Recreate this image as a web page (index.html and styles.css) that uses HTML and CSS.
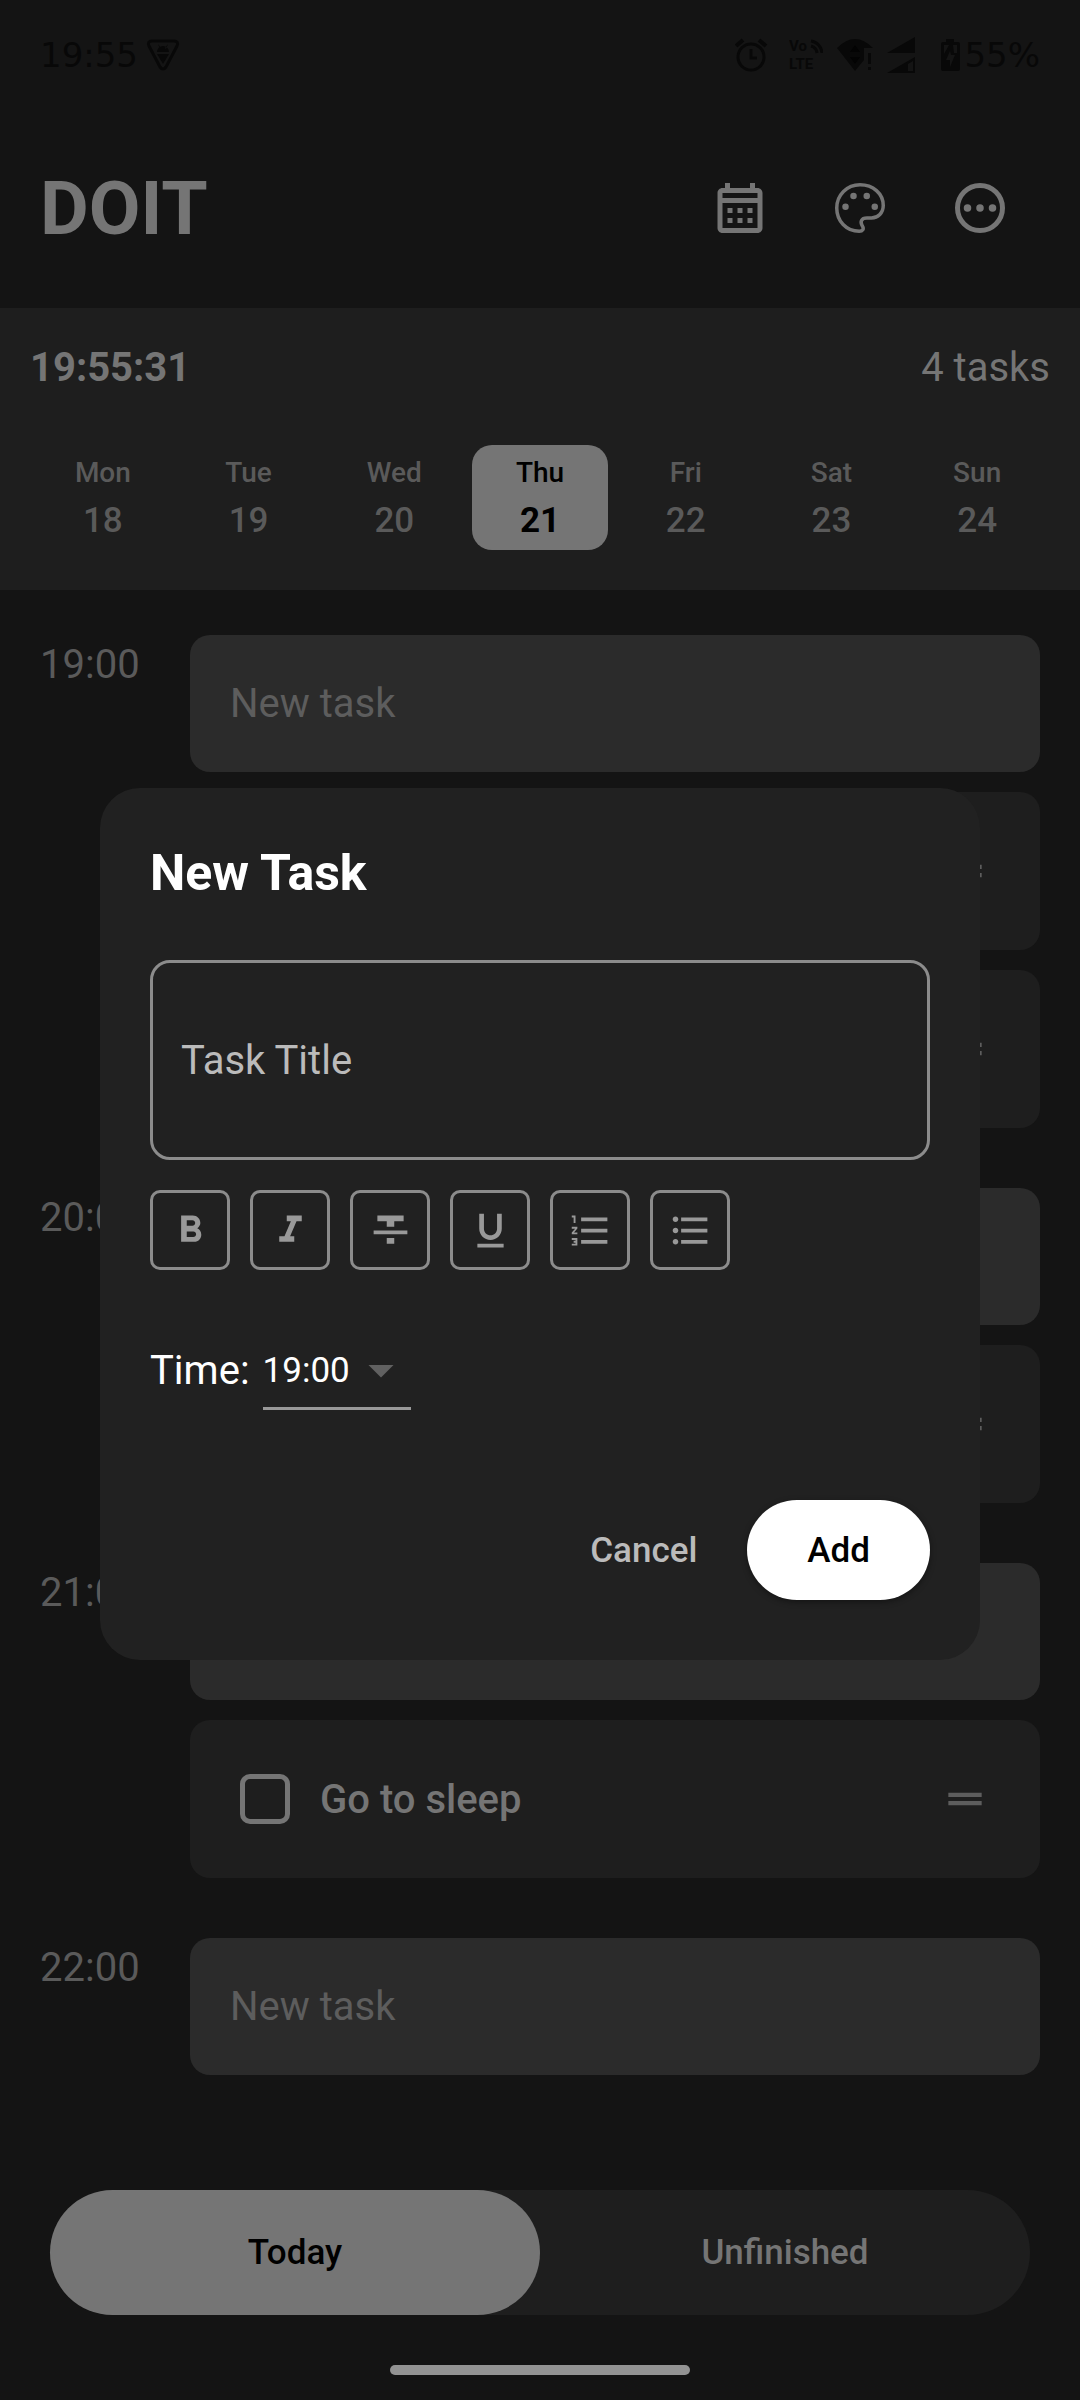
FILE: index.html
```html
<!DOCTYPE html>
<html lang="en">
  <head>
    <meta charset="UTF-8" />
    <meta name="viewport" content="width=device-width, initial-scale=1.0" />
    <title>DOIT</title>
    <link rel="stylesheet" href="styles.css">
  </head>
  <body>
    <div class="status-bar">
      <div class="status-left">
        <span>19:55</span>
        <svg width="34" height="32" viewBox="0 0 34 32">
          <path d="M6 2h22q5 0 3 5L20 28q-3 4-6 0L3 7Q1 2 6 2z" fill="none" stroke="currentColor" stroke-width="3" />
          <path d="M11 13a6 6 0 0 1 12 0zM11 15h12l-6 10zM12 5l3 4-1 1zM22 5l-3 4 1 1z" fill="currentColor" />
        </svg>
      </div>
      <div class="status-right">
        <svg width="40" height="36" viewBox="0 0 40 36" fill="none" stroke="currentColor">
          <circle cx="16" cy="20" r="13" stroke-width="3" />
          <path d="M16 12v9h6" stroke-width="3" />
          <path d="M1 9l7-6M31 9l-7-6" stroke-width="4" />
        </svg>
        <svg class="volte" width="34" height="36" viewBox="0 0 34 36">
          <text x="0" y="14">Vo</text>
          <text x="0" y="32">LTE</text>
          <path d="M22 9a8 8 0 0 1 6 7M22 4a13 13 0 0 1 11 12" fill="none" stroke="currentColor" stroke-width="3" />
        </svg>
        <svg width="36" height="36" viewBox="0 0 36 36" fill="currentColor">
          <path d="M0 11Q18-7 36 11h-9v12l-9 11z" />
          <path d="M31 16h3v11h-3zM31 30h3v3h-3z" />
          <path d="M18 8l5 7H13zM18 27l-5-7h10z" fill="#030303" />
        </svg>
        <svg width="40" height="36" viewBox="0 0 40 36" fill="currentColor">
          <path d="M0 16L28 0v16zM0 36l28-16v16z" />
          <path d="M21 27l5-3v10h-5z" fill="#141414" />
        </svg>
        <svg width="19" height="36" viewBox="0 0 19 36">
          <path d="M5 2h8v3h4q2 0 2 2v25q0 2-2 2H2q-2 0-2-2V7q0-2 2-2h3z" fill="currentColor" />
          <path d="M3 17V8h5zM9 14l-4 9h4v7l5-12h-4zM12 8h4v8h-3z" fill="#141414" />
        </svg>
        <span>55%</span>
      </div>
    </div>

    <header class="header">
      <h1>DOIT</h1>
      <div class="header-actions">
        <button class="icon-button" aria-label="Calendar">
          <svg viewBox="0 0 24 24" fill="currentColor"><path d="M19 4h-1V2h-2v2H8V2H6v2H5c-1.11 0-1.99.9-1.99 2L3 20c0 1.1.89 2 2 2h14c1.1 0 2-.9 2-2V6c0-1.1-.9-2-2-2zm0 16H5V10h14v10zm0-12H5V6h14v2zM9 14H7v-2h2v2zm4 0h-2v-2h2v2zm4 0h-2v-2h2v2zm-8 4H7v-2h2v2zm4 0h-2v-2h2v2zm4 0h-2v-2h2v2z" /></svg>
        </button>
        <button class="icon-button" aria-label="Theme">
          <svg viewBox="0 0 24 24" fill="currentColor">
            <path d="M12 2.7c5.2 0 9.3 3.5 9.3 8.3 0 2.9-2.1 5-4.7 5h-1.8c-2.4 0-2.8 1.6-1.9 3.1.9 1.4.1 2.2-1.2 2.2-5.2 0-9-4.1-9-9.3S6.8 2.7 12 2.7z" fill="none" stroke="currentColor" stroke-width="1.4" />
            <circle cx="6.2" cy="11.5" r="1.3" />
            <circle cx="9.4" cy="7.2" r="1.3" />
            <circle cx="14.7" cy="7.2" r="1.3" />
            <circle cx="17.9" cy="11.5" r="1.3" />
          </svg>
        </button>
        <button class="icon-button" aria-label="More">
          <svg viewBox="0 0 24 24" fill="currentColor">
            <circle cx="12" cy="12" r="9" fill="none" stroke="currentColor" stroke-width="2" />
            <circle cx="7" cy="12" r="1.5" />
            <circle cx="12" cy="12" r="1.5" />
            <circle cx="17" cy="12" r="1.5" />
          </svg>
        </button>
      </div>
    </header>

    <section class="week-panel">
      <div class="summary">
        <time class="clock">19:55:31</time>
        <span>4 tasks</span>
      </div>
      <div class="week">
        <button class="day"><span class="day-name">Mon</span><span class="day-number">18</span></button>
        <button class="day"><span class="day-name">Tue</span><span class="day-number">19</span></button>
        <button class="day"><span class="day-name">Wed</span><span class="day-number">20</span></button>
        <button class="day selected"><span class="day-name">Thu</span><span class="day-number">21</span></button>
        <button class="day"><span class="day-name">Fri</span><span class="day-number">22</span></button>
        <button class="day"><span class="day-name">Sat</span><span class="day-number">23</span></button>
        <button class="day"><span class="day-name">Sun</span><span class="day-number">24</span></button>
      </div>
    </section>

    <main class="timeline">
      <div class="hour">
        <time class="hour-label">19:00</time>
        <div class="hour-tasks">
          <input class="new-task" type="text" placeholder="New task" aria-label="New task at 19:00" />
          <div class="task">
            <input class="task-check" type="checkbox" aria-label="Done" />
            <svg class="drag-handle" viewBox="0 0 24 24"><path d="M20 9H4v2h16V9zM4 15h16v-2H4v2z" /></svg>
          </div>
          <div class="task">
            <input class="task-check" type="checkbox" aria-label="Done" />
            <svg class="drag-handle" viewBox="0 0 24 24"><path d="M20 9H4v2h16V9zM4 15h16v-2H4v2z" /></svg>
          </div>
        </div>
      </div>
      <div class="hour">
        <time class="hour-label">20:00</time>
        <div class="hour-tasks">
          <input class="new-task" type="text" placeholder="New task" aria-label="New task at 20:00" />
          <div class="task">
            <input class="task-check" type="checkbox" aria-label="Done" />
            <svg class="drag-handle" viewBox="0 0 24 24"><path d="M20 9H4v2h16V9zM4 15h16v-2H4v2z" /></svg>
          </div>
        </div>
      </div>
      <div class="hour">
        <time class="hour-label">21:00</time>
        <div class="hour-tasks">
          <input class="new-task" type="text" placeholder="New task" aria-label="New task at 21:00" />
          <div class="task">
            <input class="task-check" type="checkbox" id="sleep" />
            <label for="sleep">Go to sleep</label>
            <svg class="drag-handle" viewBox="0 0 24 24"><path d="M20 9H4v2h16V9zM4 15h16v-2H4v2z" /></svg>
          </div>
        </div>
      </div>
      <div class="hour">
        <time class="hour-label">22:00</time>
        <div class="hour-tasks">
          <input class="new-task" type="text" placeholder="New task" aria-label="New task at 22:00" />
        </div>
      </div>
    </main>

    <nav class="tabs">
      <button class="tab active">Today</button>
      <button class="tab">Unfinished</button>
    </nav>
    <div class="home-indicator"></div>

    <div class="overlay">
      <form class="dialog" role="dialog" aria-labelledby="dialogTitle">
        <h2 id="dialogTitle">New Task</h2>
        <input class="title-input" type="text" placeholder="Task Title" aria-label="Task Title" />

        <div class="toolbar">
          <button type="button" class="format-button" aria-label="Bold">
            <svg viewBox="0 0 24 24"><path d="M15.6 10.79c.97-.67 1.65-1.77 1.65-2.79 0-2.26-1.75-4-4-4H7v14h7.04c2.09 0 3.71-1.7 3.71-3.79 0-1.52-.86-2.82-2.15-3.42zM10 6.5h3c.83 0 1.5.67 1.5 1.5s-.67 1.5-1.5 1.5h-3v-3zm3.5 9H10v-3h3.5c.83 0 1.5.67 1.5 1.5s-.67 1.5-1.5 1.5z" /></svg>
          </button>
          <button type="button" class="format-button" aria-label="Italic">
            <svg viewBox="0 0 24 24"><path d="M10 4v3h2.21l-3.42 8H6v3h8v-3h-2.21l3.42-8H18V4z" /></svg>
          </button>
          <button type="button" class="format-button" aria-label="Strikethrough">
            <svg viewBox="0 0 24 24"><path d="M10 19h4v-3h-4v3zM5 4v3h5v3h4V7h5V4H5zM3 14h18v-2H3v2z" /></svg>
          </button>
          <button type="button" class="format-button" aria-label="Underline">
            <svg viewBox="0 0 24 24"><path d="M12 17c3.31 0 6-2.69 6-6V3h-2.5v8c0 1.93-1.57 3.5-3.5 3.5S8.5 12.93 8.5 11V3H6v8c0 3.31 2.69 6 6 6zm-7 2v2h14v-2H5z" /></svg>
          </button>
          <button type="button" class="format-button" aria-label="Numbered list">
            <svg viewBox="0 0 24 24"><path d="M2 17h2v.5H3v1h1v.5H2v1h3v-4H2v1zm1-9h1V4H2v1h1v3zm-1 3h1.8L2 13.1v.9h3v-1H3.2L5 10.9V10H2v1zm5-6v2h14V5H7zm0 14h14v-2H7v2zm0-6h14v-2H7v2z" /></svg>
          </button>
          <button type="button" class="format-button" aria-label="Bulleted list">
            <svg viewBox="0 0 24 24"><path d="M4 10.5c-.83 0-1.5.67-1.5 1.5s.67 1.5 1.5 1.5 1.5-.67 1.5-1.5-.67-1.5-1.5-1.5zm0-6c-.83 0-1.5.67-1.5 1.5S3.17 7.5 4 7.5 5.5 6.83 5.5 6 4.83 4.5 4 4.5zm0 12c-.83 0-1.5.68-1.5 1.5s.68 1.5 1.5 1.5 1.5-.68 1.5-1.5-.67-1.5-1.5-1.5zM7 19h14v-2H7v2zm0-6h14v-2H7v2zm0-8v2h14V5H7z" /></svg>
          </button>
        </div>

        <div class="time-row">
          <label for="taskTime">Time:</label>
          <div class="select-wrap">
            <select id="taskTime">
              <option>19:00</option>
              <option>20:00</option>
              <option>21:00</option>
              <option>22:00</option>
            </select>
            <svg class="select-arrow" viewBox="0 0 24 24"><path d="M7 10l5 5 5-5z" /></svg>
          </div>
        </div>

        <div class="dialog-actions">
          <button type="button" class="cancel-button">Cancel</button>
          <button type="submit" class="add-button">Add</button>
        </div>
      </form>
    </div>
  </body>
</html>
```

FILE: styles.css
```css
* {
  margin: 0;
  padding: 0;
  box-sizing: border-box;
}

body {
  font-family: Roboto, "Liberation Sans", sans-serif;
  font-size: 40px;
  background: #141414;
  color: #757575;
  min-height: 100vh;
  display: flex;
  flex-direction: column;
}

button,
input,
select {
  font: inherit;
  color: inherit;
  background: none;
  border: none;
  outline: none;
}

button {
  cursor: pointer;
}

svg {
  display: block;
  flex-shrink: 0;
}

/* Status bar */
.status-bar {
  height: 110px;
  padding: 0 40px;
  display: flex;
  align-items: center;
  justify-content: space-between;
  font-family: "DejaVu Sans", sans-serif;
  font-size: 34px;
  color: #080808;
}

.status-left {
  display: flex;
  align-items: center;
  gap: 8px;
}

.status-right {
  display: flex;
  align-items: center;
  gap: 14px;
}

.status-right span {
  margin-left: -10px;
}

.volte {
  font-family: Roboto, sans-serif;
  font-size: 15px;
  font-weight: 700;
  fill: currentColor;
}

/* Header */
.header {
  height: 198px;
  padding: 0 40px 2px;
  display: flex;
  align-items: center;
  justify-content: space-between;
}

.header h1 {
  font-size: 75px;
  font-weight: 700;
}

.header-actions {
  display: flex;
}

.icon-button {
  width: 120px;
  height: 120px;
  display: flex;
  align-items: center;
  justify-content: center;
}

.icon-button svg {
  width: 60px;
  height: 60px;
}

/* Week */
.week-panel {
  background: #1e1e1e;
  padding: 30px 30px 40px;
}

.summary {
  display: flex;
  justify-content: space-between;
  line-height: 60px;
  margin-bottom: 47px;
}

.clock {
  font-weight: 700;
}

.week {
  display: flex;
}

.day {
  flex: 1;
  height: 105px;
  margin: 0 5px;
  border-radius: 20px;
  display: flex;
  flex-direction: column;
  align-items: center;
  justify-content: center;
  gap: 6px;
  font-weight: 500;
  color: #5a5a5a;
}

.day-name {
  font-size: 28px;
  line-height: 40px;
}

.day-number {
  font-size: 35px;
  line-height: 44px;
}

.day.selected {
  background: #757575;
  color: #000;
}

.day.selected .day-number {
  font-weight: 700;
}

/* Timeline */
.timeline {
  flex: 1;
  padding: 45px 40px;
  display: flex;
  flex-direction: column;
  gap: 60px;
}

.hour {
  display: flex;
}

.hour-label {
  width: 150px;
  line-height: 60px;
  color: #5a5a5a;
}

.hour-tasks {
  flex: 1;
  display: flex;
  flex-direction: column;
  gap: 20px;
}

.new-task {
  width: 100%;
  height: 137px;
  padding: 0 40px;
  border-radius: 20px;
  background: #2b2b2b;
}

.new-task::placeholder {
  color: #5d5d5d;
}

.task {
  height: 158px;
  padding: 0 50px;
  border-radius: 20px;
  background: #1e1e1e;
  display: flex;
  align-items: center;
  gap: 30px;
  font-weight: 500;
}

.task-check {
  appearance: none;
  width: 50px;
  height: 50px;
  border: 5px solid #757575;
  border-radius: 10px;
}

.drag-handle {
  width: 50px;
  height: 50px;
  margin-left: auto;
  fill: #5d5d5d;
}

/* Bottom tabs */
.tabs {
  margin: 0 50px;
  height: 125px;
  border-radius: 63px;
  background: #1e1e1e;
  display: flex;
}

.tab {
  flex: 1;
  border-radius: 63px;
  font-size: 35px;
  font-weight: 500;
}

.tab.active {
  background: #757575;
  color: #000;
}

.home-indicator {
  width: 300px;
  height: 10px;
  margin: 50px auto 25px;
  border-radius: 5px;
  background: #939393;
}

/* New task dialog */
.overlay {
  position: fixed;
  inset: 0;
  padding: 98px 100px 50px;
  display: flex;
  align-items: center;
  justify-content: center;
}

.dialog {
  flex: 1;
  padding: 50px 50px 60px;
  border-radius: 40px;
  background: #212121;
  color: #fff;
}

.dialog h2 {
  font-size: 50px;
  line-height: 70px;
  font-weight: 700;
  margin-bottom: 52px;
}

.title-input {
  display: block;
  width: 100%;
  height: 200px;
  padding: 0 28px;
  border: 3px solid #8c8c8c;
  border-radius: 20px;
}

.title-input::placeholder {
  color: #bbb;
}

.toolbar {
  display: flex;
  gap: 20px;
  margin: 30px 0 60px;
}

.format-button {
  width: 80px;
  height: 80px;
  border: 3px solid #8c8c8c;
  border-radius: 10px;
  display: flex;
  align-items: center;
  justify-content: center;
}

.format-button svg {
  width: 45px;
  height: 45px;
  fill: #999;
}

.time-row {
  display: flex;
  align-items: center;
  gap: 13px;
  margin-bottom: 90px;
}

.select-wrap {
  position: relative;
}

.select-wrap select {
  appearance: none;
  display: block;
  width: 148px;
  height: 80px;
  padding-top: 4px;
  font-size: 35px;
  border-bottom: 3px solid #999;
}

.select-arrow {
  position: absolute;
  top: 10px;
  right: 0;
  width: 60px;
  height: 60px;
  fill: #616161;
  pointer-events: none;
}

.dialog-actions {
  display: flex;
  justify-content: flex-end;
  gap: 20px;
  font-size: 35px;
  font-weight: 500;
}

.cancel-button {
  padding: 0 30px;
  color: #bbb;
}

.add-button {
  height: 100px;
  padding: 0 60px;
  border-radius: 50px;
  background: #fff;
  color: #000;
  box-shadow: 0 2px 6px rgba(0, 0, 0, 0.4);
}
```
